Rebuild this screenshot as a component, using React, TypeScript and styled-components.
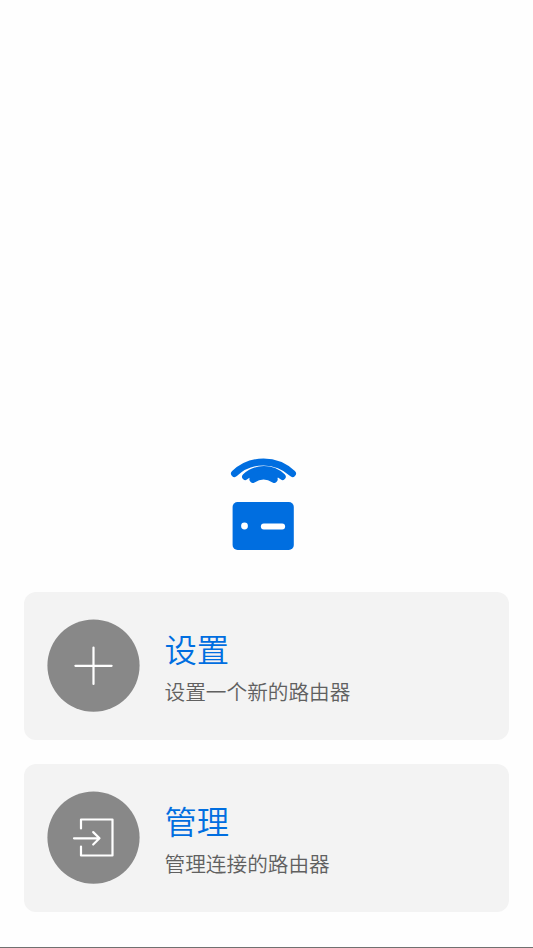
import React from 'react';
import styled, { createGlobalStyle } from 'styled-components';

const GlobalStyle = createGlobalStyle`
  * { box-sizing: border-box; }
  body { margin: 0; background: #fefefe; overflow: hidden; }
`;

const Screen = styled.main`
  display: flex;
  flex-direction: column;
  justify-content: flex-end;
  width: 533px;
  height: 948px;
  border-bottom: 1px solid #707070;
  background: #fefefe;
  font-family: 'Noto Sans CJK SC', sans-serif;
`;

const RouterLogo = styled.svg`
  display: block;
  width: 80px;
  height: 105px;
  margin: 0 0 37px 223px;
  flex: none;
`;

const Actions = styled.nav`
  display: flex;
  flex-direction: column;
  gap: 24px;
  padding: 0 24px 35px;
`;

const Card = styled.button`
  display: flex;
  align-items: center;
  gap: 24.5px;
  width: 485px;
  height: 148px;
  padding: 0 0 0 23px;
  border: 0;
  border-radius: 12px;
  background: #f3f3f3;
  font-family: inherit;
  font-weight: 350;
  text-align: left;
`;

const IconDisc = styled.svg`
  display: block;
  width: 93px;
  height: 94px;
  flex: none;
  fill: none;
  stroke: #fff;
  stroke-width: 2.2;
  stroke-linecap: round;
  stroke-linejoin: round;
`;

const Labels = styled.span`
  display: flex;
  flex-direction: column;
  padding-top: 2px;
`;

const Title = styled.span`
  color: #006ee0;
  font-size: 32.3px;
  line-height: 48px;
`;

const Subtitle = styled.span`
  color: #606060;
  font-size: 20.67px;
  line-height: 39px;
`;

const Disc = () => <circle cx="46.5" cy="46.6" r="46.1" fill="#888" stroke="none" />;

const PlusIcon = () => (
  <IconDisc viewBox="0 0 93 94">
    <Disc />
    <path d="M28.4 46.8H64.6M46.5 28.5V65" />
  </IconDisc>
);

const EnterIcon = () => (
  <IconDisc viewBox="0 0 93 94">
    <Disc />
    <path d="M34 37.5V28.5H65.5V64.5H34V55.5" />
    <path d="M27 47.3H52M46.2 41.1L52.5 47.3L46.2 53.5" />
  </IconDisc>
);

const actions = [
  { title: '设置', subtitle: '设置一个新的路由器', Icon: PlusIcon },
  { title: '管理', subtitle: '管理连接的路由器', Icon: EnterIcon },
];

export default function App() {
  return (
    <>
      <GlobalStyle />
      <Screen>
        <RouterLogo viewBox="0 0 80 105" fill="none" stroke="#006ee0" strokeLinecap="round">
          <path d="M11.5 23.6A42 42 0 0 1 69.5 23.6" strokeWidth="6.9" />
          <path d="M22.4 26.7A27 27 0 0 1 59.4 26.7" strokeWidth="6.6" />
          <path d="M29.8 29.6A20 20 0 0 1 51.3 29.6" strokeWidth="6.6" />
          <path d="M28 26.3Q40.5 18.5 53 26.3" strokeWidth="4.6" />
          <rect x="9.6" y="52" width="61.2" height="48" rx="5" fill="#006ee0" stroke="none" />
          <circle cx="21.5" cy="76" r="3.4" fill="#fff" stroke="none" />
          <path d="M40.8 76.5H59.2" stroke="#fff" strokeWidth="5.8" />
        </RouterLogo>
        <Actions>
          {actions.map(({ title, subtitle, Icon }) => (
            <Card key={title}>
              <Icon />
              <Labels>
                <Title>{title}</Title>
                <Subtitle>{subtitle}</Subtitle>
              </Labels>
            </Card>
          ))}
        </Actions>
      </Screen>
    </>
  );
}
